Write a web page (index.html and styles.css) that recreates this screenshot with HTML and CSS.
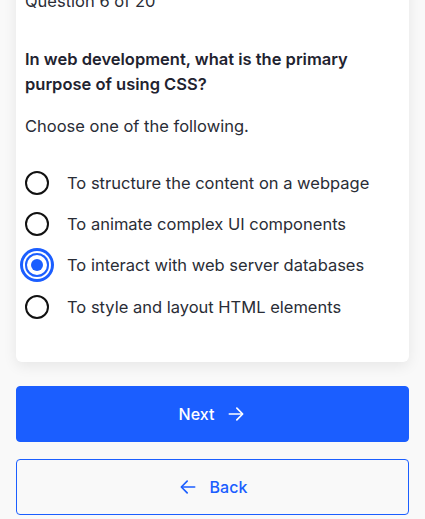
FILE: index.html
```html
<!DOCTYPE html>
<html lang="en">
<head>
<meta charset="utf-8">
<title>Quiz</title>
<link rel="stylesheet" href="styles.css">
</head>
<body>
<main class="page">
  <section class="card">
    <p class="progress">Question 6 of 20</p>
    <h2 class="question">In web development, what is the primary purpose of using CSS?</h2>
    <p class="hint">Choose one of the following.</p>
    <ul class="options">
      <li class="option"><span class="radio"></span><span class="label">To structure the content on a webpage</span></li>
      <li class="option"><span class="radio"></span><span class="label">To animate complex UI components</span></li>
      <li class="option selected"><span class="radio"><span class="dot"></span></span><span class="label">To interact with web server databases</span></li>
      <li class="option"><span class="radio"></span><span class="label">To style and layout HTML elements</span></li>
    </ul>
  </section>
  <div class="actions">
    <button class="btn btn-primary">Next
      <svg class="icon" viewBox="0 0 24 24" width="20" height="20" fill="none" stroke="currentColor" stroke-width="2" stroke-linecap="round" stroke-linejoin="round"><path d="M4 12h15"/><path d="M13 5l7 7-7 7"/></svg>
    </button>
    <button class="btn btn-secondary">
      <svg class="icon" viewBox="0 0 24 24" width="20" height="20" fill="none" stroke="currentColor" stroke-width="2" stroke-linecap="round" stroke-linejoin="round"><path d="M20 12H5"/><path d="M11 5l-7 7 7 7"/></svg>
      Back</button>
  </div>
</main>
</body>
</html>
```

FILE: styles.css
```css
* { box-sizing: border-box; }
html, body { margin: 0; padding: 0; }
body {
  background: #f9f9f9;
  font-family: Inter, "Noto Sans", sans-serif;
  color: #1f2330;
  overflow: hidden;
}
.page {
  padding: 0 16px;
  margin-top: -37px;
}
.card {
  background: #fff;
  border-radius: 6px;
  box-shadow: 0 4px 14px rgba(0,0,0,0.08);
  padding: 26px 9px 35px;
}
.progress {
  margin: 0;
  font-size: 16.5px;
  line-height: 24px;
  color: #2a2d36;
}
.question {
  margin: 34px 0 0;
  font-size: 16.5px;
  font-weight: 600;
  line-height: 25px;
  color: #1f2330;
}
.hint {
  margin: 17px 0 0;
  font-size: 16.5px;
  line-height: 24px;
  color: #2a2d36;
}
.options {
  list-style: none;
  margin: 24px 0 0;
  padding: 0;
}
.option {
  display: flex;
  align-items: center;
  gap: 18px;
  height: 41.3px;
}
.radio {
  flex: none;
  width: 24px;
  height: 24px;
  border: 2px solid #111;
  border-radius: 50%;
  display: flex;
  align-items: center;
  justify-content: center;
}
.selected .radio {
  border-color: #1b5eff;
  box-shadow: 0 0 0 2px #fff, 0 0 0 5px #1b5eff;
}
.dot {
  width: 12px;
  height: 12px;
  border-radius: 50%;
  background: #1b5eff;
}
.label {
  font-size: 16.5px;
  line-height: 24px;
  color: #2a2d36;
}
.actions {
  margin-top: 24px;
  display: flex;
  flex-direction: column;
  gap: 17px;
}
.btn {
  height: 56px;
  width: 100%;
  border-radius: 4px;
  font-family: inherit;
  font-size: 16px;
  font-weight: 500;
  display: flex;
  align-items: center;
  justify-content: center;
  gap: 12px;
  cursor: pointer;
}
.btn-primary {
  background: #1b5eff;
  color: #fff;
  border: 1px solid #1b5eff;
}
.btn-secondary {
  background: #f9f9f9;
  color: #1b5eff;
  border: 1px solid #1b5eff;
}
.icon { display: block; }
```
